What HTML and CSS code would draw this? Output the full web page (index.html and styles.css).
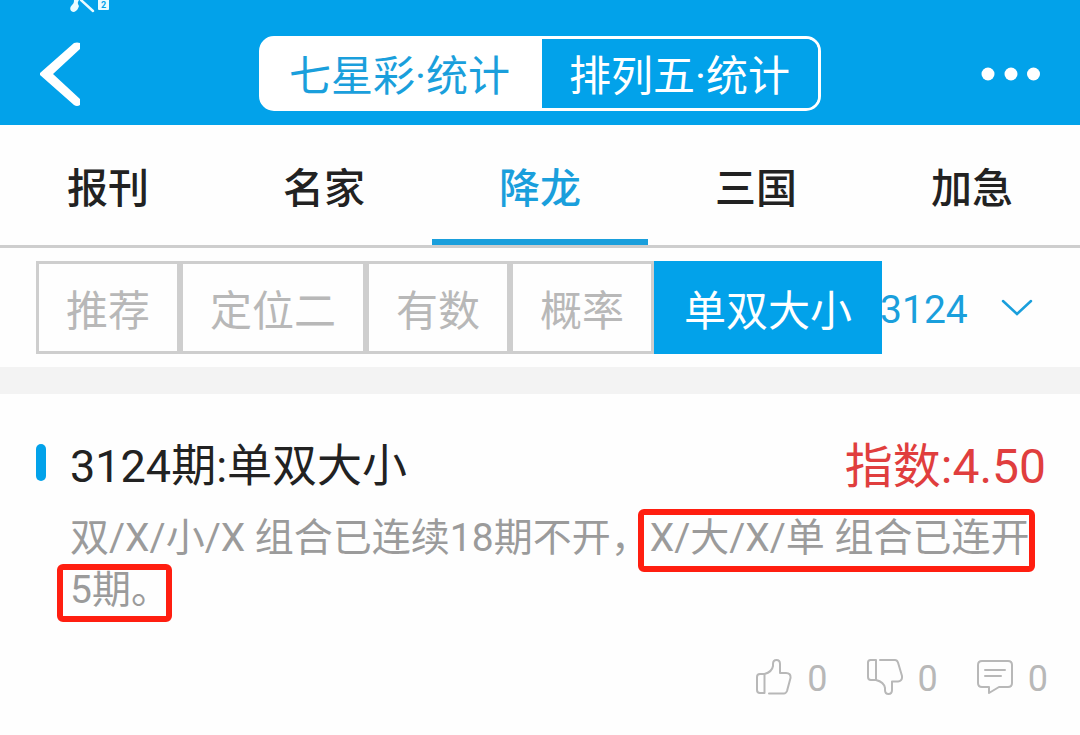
FILE: index.html
```html
<!DOCTYPE html>
<html lang="zh-CN">
<head>
<meta charset="utf-8">
<meta name="viewport" content="width=device-width, initial-scale=1">
<title>七星彩·统计</title>
<link rel="stylesheet" href="styles.css">
</head>
<body>
<header class="topbar">
  <svg class="status" width="40" height="13" viewBox="0 0 40 13" aria-hidden="true">
    <path d="M4 0H9C7 3 8 4 9 6c-1 3-2 5-5 6C0 12-1 8 2 5 4 3 4 2 4 0z" fill="#e8fbff"/>
    <path d="M11 0l12 11" stroke="#e8fbff" stroke-width="2.4" stroke-linecap="round"/>
    <rect x="28" y="-4" width="11" height="14" rx="1" fill="#e8fbff"/>
    <text class="sim" x="33.5" y="8" text-anchor="middle">2</text>
  </svg>
  <button class="back" type="button" aria-label="返回">
    <svg width="40" height="64" viewBox="0 0 40 64"><path d="M34 1q3-1 6 0v6L13 32l27 25v6q-3 2-6 0L0 33v-2z" fill="#fff"/></svg>
  </button>
  <nav class="segment">
    <button class="seg seg-on" type="button">七星彩·统计</button>
    <button class="seg" type="button">排列五·统计</button>
  </nav>
  <button class="more" type="button" aria-label="更多">
    <svg width="60" height="14" viewBox="0 0 60 14" fill="#fff"><circle cx="8" cy="7" r="6.500"/><circle cx="31" cy="7" r="6.500"/><circle cx="53.500" cy="7" r="6.500"/></svg>
  </button>
</header>

<nav class="tabs">
  <a class="tab" href="#baokan">报刊</a>
  <a class="tab" href="#mingjia">名家</a>
  <a class="tab tab-on" href="#xianglong">降龙</a>
  <a class="tab" href="#sanguo">三国</a>
  <a class="tab" href="#jiaji">加急</a>
</nav>

<div class="filters">
  <button class="filter" type="button">推荐</button>
  <button class="filter" type="button">定位二</button>
  <button class="filter" type="button">有数</button>
  <button class="filter" type="button">概率</button>
  <button class="filter filter-on" type="button">单双大小</button>
  <label class="issue">
    <select class="issue-select" aria-label="期号"><option>3124</option></select>
    <svg width="32" height="18" viewBox="0 0 32 18"><path d="M2 2l14 13L30 2" fill="none" stroke="#1a9fdc" stroke-width="2.500" stroke-linecap="round"/></svg>
  </label>
</div>

<main class="feed">
  <article class="post">
    <div class="post-head">
      <h2 class="post-title">3124期:单双大小</h2>
      <span class="score">指数:4.50</span>
    </div>
    <p class="post-text">双/X/小/X 组合已连续18期不开，<span class="mark">X/大/X/单 组合已连开</span><wbr><span class="mark mark-end">5期。</span></p>
    <div class="actions">
      <button class="action" type="button" aria-label="赞">
        <svg width="36" height="36" viewBox="0 0 36 36"><path d="M8.500 15H4Q1 15 1 18V31Q1 34 4 34H8.500zM13 34.500H28Q30 34.500 31 32L34.500 19Q35 14 30 14H24V5Q24 1 20.500 1T17 5V7Q16 13 8.500 15"/></svg>
        <span>0</span>
      </button>
      <button class="action" type="button" aria-label="踩">
        <svg width="36" height="36" viewBox="0 0 36 36"><path d="M9 1H3.500Q1 1 1 3.500V18Q1 21 4 21H9zM13 1H28Q30 1 31 3.500L35 17Q35.500 22 31 22.500H25V31Q25 35 21.500 35T18 31V29Q17 23 9 21"/></svg>
        <span>0</span>
      </button>
      <button class="action" type="button" aria-label="评论">
        <svg width="36" height="36" viewBox="0 0 36 36"><path d="M5 2H31Q35 2 35 6V24Q35 28 31 28H22L12 34V28H5Q1 28 1 24V6Q1 2 5 2zM8 11H28M8 17H24"/></svg>
        <span>0</span>
      </button>
    </div>
  </article>
</main>
</body>
</html>
```
FILE: styles.css
```css
* {
  box-sizing: border-box;
}

body {
  margin: 0;
  background: #fefefe;
  color: #222;
  font-family: Roboto, "Noto Sans CJK SC", sans-serif;
}

button {
  margin: 0;
  padding: 0;
  border: 0;
  background: none;
  color: inherit;
  font: inherit;
  white-space: nowrap;
}

svg {
  display: block;
}

.topbar {
  position: relative;
  display: grid;
  grid-template-columns: 1fr auto 1fr;
  align-items: center;
  padding: 36px 40px 14px;
  background: #02a2ea;
}

.status {
  position: absolute;
  top: 0;
  left: 70px;
}

.sim {
  fill: #02a2ea;
  font-size: 9px;
  font-weight: 700;
}

.back {
  justify-self: start;
}

.more {
  justify-self: end;
}

.segment {
  display: flex;
  overflow: hidden;
  border: 3px solid #fff;
  border-radius: 15px;
  background: linear-gradient(90deg, #fff 50%, #02a2ea 50%);
}

.seg {
  padding: 6px 28px 0 27px;
  background: #02a2ea;
  color: #fff;
  font-size: 42px;
  line-height: 63px;
}

.seg-on {
  padding-right: 32px;
  background: #fff;
  color: #1a9fdc;
}

.tabs {
  display: grid;
  grid-template-columns: repeat(5, 1fr);
  border-bottom: 3px solid #cecece;
}

.tab {
  padding-top: 14px;
  border-bottom: 6px solid transparent;
  color: #222;
  font-size: 41px;
  font-weight: 500;
  line-height: 100px;
  text-align: center;
  text-decoration: none;
}

.tab-on {
  border-color: #1a9fdc;
  color: #1a9fdc;
}

.filters {
  display: flex;
  padding: 13px 36px;
  border-bottom: 27px solid #f3f3f3;
}

.filter {
  padding: 11px 27px 3px;
  border: 3px solid #cecece;
  color: #b8b8b8;
  font-size: 42px;
  line-height: 73px;
}

.filter-on {
  border-color: #02a2ea;
  background: #02a2ea;
  color: #fff;
}

.issue {
  display: flex;
  flex: 1;
  align-items: center;
  justify-content: space-between;
  margin-left: -2px;
  padding-right: 11px;
  color: #1a9fdc;
}

.issue-select {
  padding: 4px 0 0;
  border: 0;
  appearance: none;
  background: none;
  color: inherit;
  font: inherit;
  font-size: 39px;
}

.post {
  padding: 40px 32px 32px 36px;
}

.post-head {
  display: flex;
  align-items: center;
  justify-content: space-between;
  padding-right: 2px;
}

.post-title {
  display: flex;
  align-items: center;
  gap: 24px;
  margin: 0;
  font-size: 45px;
  font-weight: 400;
  line-height: 66px;
}

.post-title::before {
  width: 10px;
  height: 37px;
  margin-bottom: 10px;
  border-radius: 5px;
  background: #02a2ea;
  content: "";
}

.score {
  color: #e03e3e;
  font-size: 48px;
  line-height: 66px;
}

.post-text {
  margin: 12px 0 0 34px;
  color: #9b9b9b;
  font-size: 39px;
  line-height: 52px;
}

.mark {
  position: relative;
  white-space: nowrap;
}

.mark::after {
  position: absolute;
  inset: -6px -5px -11px -12px;
  border: 6px solid #ff1e10;
  border-radius: 6px;
  content: "";
}

.mark-end::after {
  inset: -3px -2px -9px -13px;
}

.actions {
  display: flex;
  justify-content: flex-end;
  gap: 39px;
  margin-top: 35px;
}

.action {
  display: flex;
  align-items: center;
  gap: 15px;
  color: #b8b8b8;
  font-size: 36px;
  line-height: 48px;
}

.action svg {
  fill: none;
  stroke: #b8b8b8;
  stroke-width: 2;
  stroke-linejoin: round;
  stroke-linecap: round;
}

.action span {
  padding-top: 4px;
}
```
